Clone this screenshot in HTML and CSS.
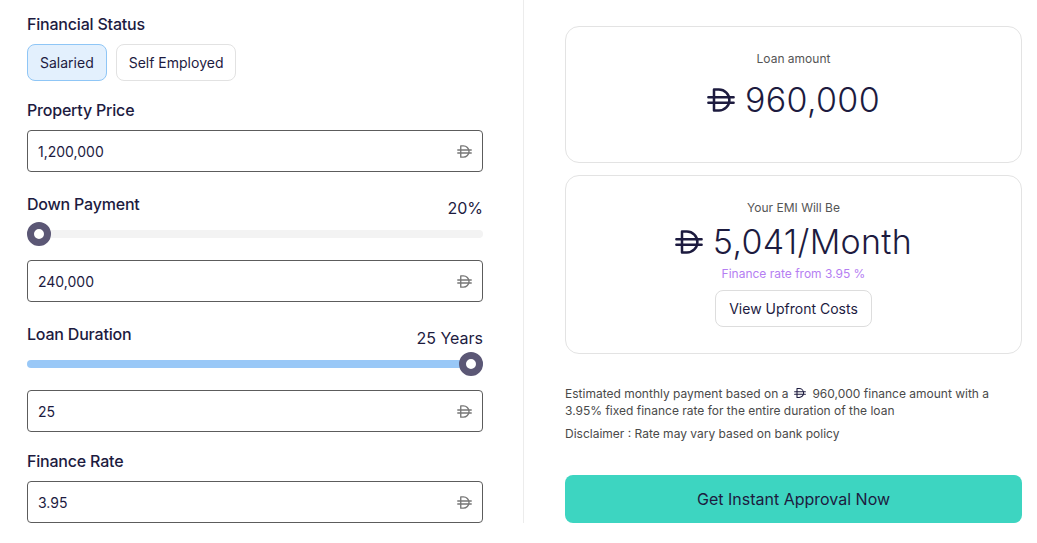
FILE: index.html
```html
<!DOCTYPE html>
<html lang="en">
<head>
  <meta charset="UTF-8" />
  <meta name="viewport" content="width=device-width, initial-scale=1.0"/>
  <title>Mortgage Calculator</title>
  <link rel="stylesheet" href="styles.css">
</head>
<body>

  <svg width="0" height="0" class="defs">
    <symbol id="aed" viewBox="0 0 20 20">
      <path d="M5 2.5V17.5M5 2.5H8.5A7.5 7.5 0 0 1 8.5 17.5H5M1 8H19M1 12H19" fill="none" stroke="currentColor" stroke-width="1.8" stroke-linecap="round" />
    </symbol>
  </svg>

  <div class="calculator">

    <!-- Inputs -->
    <div class="form-col">
      <div class="field">
        <div class="label-row"><span class="label">Financial Status</span></div>
        <div class="status-group">
          <button class="status active">Salaried</button>
          <button class="status">Self Employed</button>
        </div>
      </div>

      <div class="field">
        <div class="label-row"><span class="label">Property Price</span></div>
        <div class="input-box">
          <span>1,200,000</span>
          <svg class="cur"><use href="#aed" /></svg>
        </div>
      </div>

      <div class="field with-slider">
        <div class="label-row"><span class="label">Down Payment</span><span class="value">20%</span></div>
        <div class="slider">
          <div class="track"></div>
          <div class="thumb at-start"></div>
        </div>
        <div class="input-box">
          <span>240,000</span>
          <svg class="cur"><use href="#aed" /></svg>
        </div>
      </div>

      <div class="field with-slider">
        <div class="label-row"><span class="label">Loan Duration</span><span class="value">25 Years</span></div>
        <div class="slider">
          <div class="track"><div class="fill" style="width: 100%"></div></div>
          <div class="thumb at-end"></div>
        </div>
        <div class="input-box">
          <span>25</span>
          <svg class="cur"><use href="#aed" /></svg>
        </div>
      </div>

      <div class="field">
        <div class="label-row"><span class="label">Finance Rate</span></div>
        <div class="input-box">
          <span>3.95</span>
          <svg class="cur"><use href="#aed" /></svg>
        </div>
      </div>
    </div>

    <!-- Results -->
    <div class="result-col">
      <div class="card loan-card">
        <div class="card-title">Loan amount</div>
        <div class="amount"><svg class="big-cur"><use href="#aed" /></svg>960,000</div>
      </div>

      <div class="card emi-card">
        <div class="card-title">Your EMI Will Be</div>
        <div class="amount"><svg class="big-cur"><use href="#aed" /></svg>5,041/Month</div>
        <div class="rate">Finance rate from 3.95 %</div>
        <button class="outline-btn">View Upfront Costs</button>
      </div>

      <p class="note">Estimated monthly payment based on a<svg class="small-cur"><use href="#aed" /></svg>960,000 finance amount with a<br>3.95% fixed finance rate for the entire duration of the loan</p>
      <p class="note">Disclaimer : Rate may vary based on bank policy</p>

      <button class="approve-btn">Get Instant Approval Now</button>
    </div>

  </div>

</body>
</html>
```

FILE: styles.css
```css
:root {
  --navy: #1d1b3f;
  --border: #5c5c5c;
  --card-border: #e3e3e3;
  --muted: #555;
  --teal: #3dd5c1;
  --purple: #b57ef2;
}

* {
  box-sizing: border-box;
  margin: 0;
  padding: 0;
}

body {
  font-family: Inter, 'Noto Sans', sans-serif;
  background: #fff;
  color: var(--navy);
}

.defs {
  position: absolute;
}

.calculator {
  display: flex;
  height: 523px;
}

.form-col {
  width: 524px;
  padding: 12px 40px 0 27px;
  border-right: 1px solid #ececec;
  display: flex;
  flex-direction: column;
  gap: 17px;
}

.field {
  display: flex;
  flex-direction: column;
}

.field.with-slider {
  margin-top: 3px;
}

.label-row {
  display: flex;
  justify-content: space-between;
  align-items: center;
  height: 24px;
  margin-bottom: 8px;
}

.label {
  font-size: 16px;
  font-weight: 500;
  letter-spacing: -0.2px;
}

.value {
  font-size: 16px;
  position: relative;
  top: 4px;
}

.status-group {
  display: flex;
  gap: 9px;
}

.status {
  font-family: inherit;
  font-size: 14px;
  color: var(--navy);
  background: #fff;
  border: 1px solid #e2e2e2;
  border-radius: 8px;
  height: 37px;
  padding: 0 12px;
}

.status.active {
  background: #e3f0fd;
  border-color: #8fc6f6;
}

.input-box {
  display: flex;
  align-items: center;
  justify-content: space-between;
  height: 42px;
  border: 1px solid var(--border);
  border-radius: 4px;
  padding: 0 10px;
  font-size: 14px;
}

.cur {
  width: 15px;
  height: 15px;
  color: #777;
}

.slider {
  position: relative;
  height: 24px;
  margin: -2px 0 14px;
}

.track {
  position: absolute;
  left: 0;
  right: 0;
  top: 8px;
  height: 8px;
  border-radius: 4px;
  background: #f3f3f3;
  overflow: hidden;
}

.fill {
  height: 100%;
  background: #99c8f7;
}

.thumb {
  position: absolute;
  top: 0;
  width: 24px;
  height: 24px;
  border-radius: 50%;
  background: #fff;
  border: 7px solid #5b5775;
}

.thumb.at-start {
  left: 0;
}

.thumb.at-end {
  right: 0;
}

.result-col {
  width: 498px;
  padding: 26px 0 0 41px;
  display: flex;
  flex-direction: column;
}

.card {
  border: 1px solid var(--card-border);
  border-radius: 14px;
  display: flex;
  flex-direction: column;
  align-items: center;
}

.loan-card {
  height: 137px;
  padding-top: 24px;
  margin-bottom: 12px;
}

.emi-card {
  height: 179px;
  padding-top: 24px;
}

.card-title {
  font-size: 12px;
  color: var(--muted);
}

.amount {
  display: flex;
  align-items: center;
  font-size: 34px;
  font-weight: 300;
  letter-spacing: 0.3px;
  margin-top: 13px;
}

.emi-card .amount {
  margin-top: 6px;
}

.big-cur {
  width: 28px;
  height: 28px;
  margin-right: 10px;
}

.rate {
  font-size: 12px;
  color: var(--purple);
  margin-top: 4px;
}

.outline-btn {
  font-family: inherit;
  font-size: 14px;
  color: var(--navy);
  background: #fff;
  border: 1px solid #ddd;
  border-radius: 8px;
  height: 37px;
  padding: 0 13px;
  margin-top: 9px;
}

.note {
  font-size: 12px;
  line-height: 17px;
  color: #4a4a4a;
  margin-top: 6px;
}

.note:first-of-type {
  margin-top: 31px;
}

.small-cur {
  width: 12px;
  height: 12px;
  vertical-align: -1px;
  margin: 0 6px;
  color: var(--navy);
}

.approve-btn {
  font-family: inherit;
  font-size: 16px;
  color: var(--navy);
  background: var(--teal);
  border: none;
  border-radius: 8px;
  height: 48px;
  margin-top: 33px;
}
```
